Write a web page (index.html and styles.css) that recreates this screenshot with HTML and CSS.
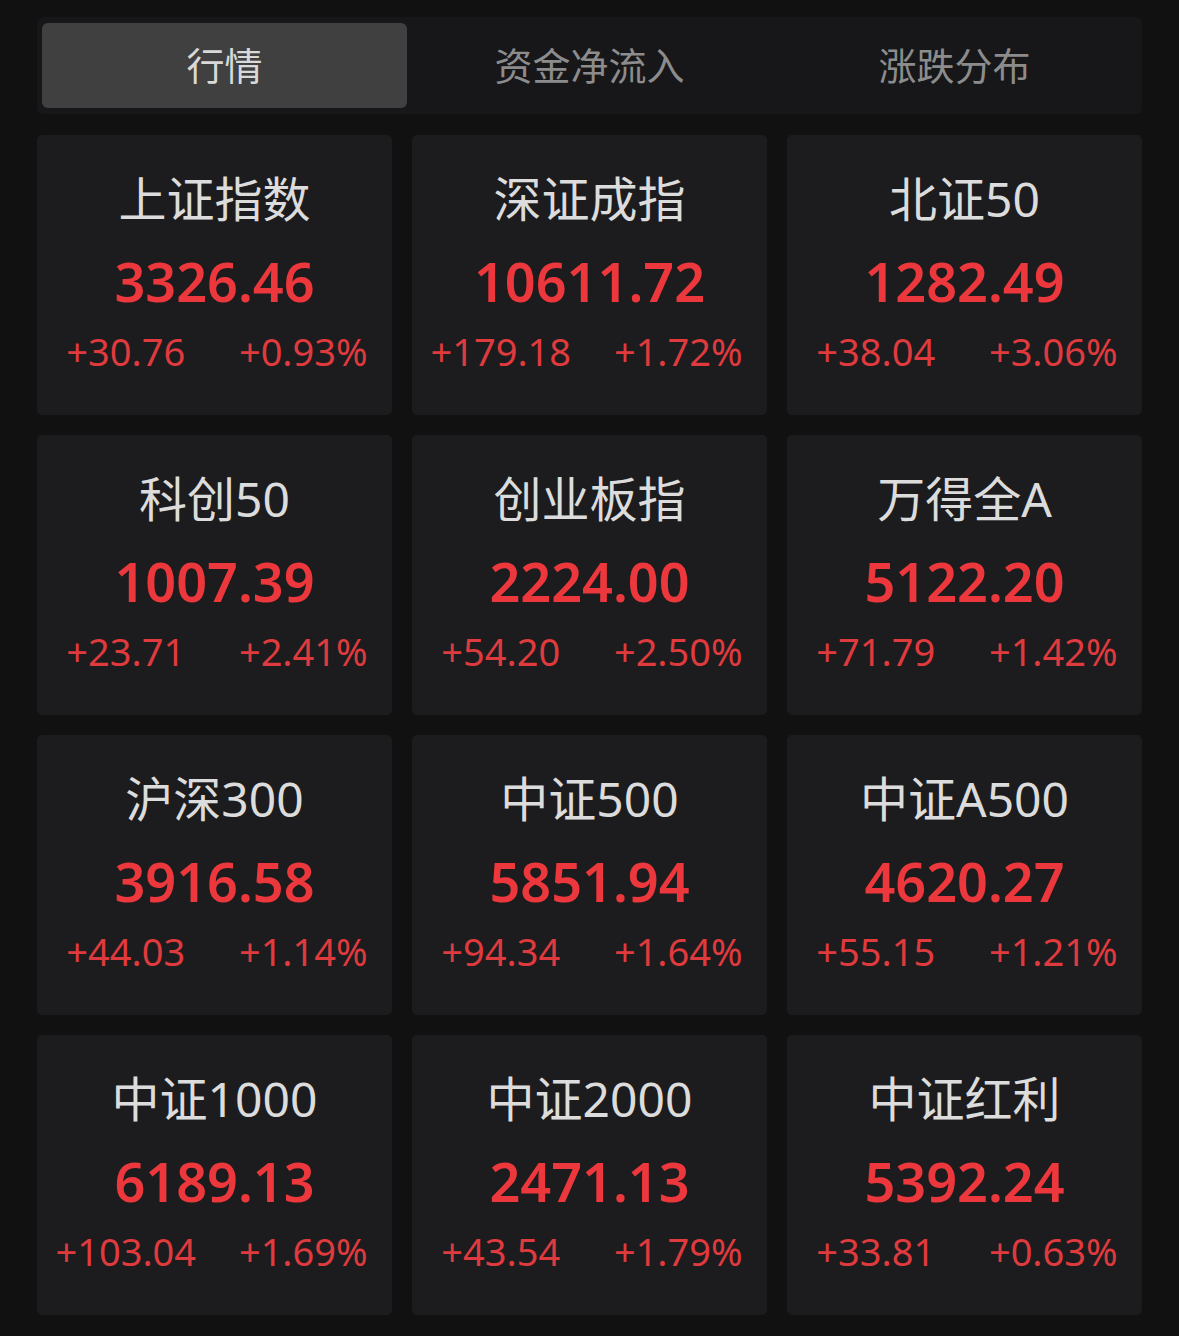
FILE: index.html
```html
<!DOCTYPE html>
<html lang="zh-CN">
<head>
<meta charset="utf-8">
<title>行情</title>
<link rel="stylesheet" href="styles.css">
</head>
<body>
<div class="page">
  <div class="tabs">
    <div class="tab active">行情</div>
    <div class="tab">资金净流入</div>
    <div class="tab">涨跌分布</div>
  </div>
  <div class="grid">
    <div class="card"><div class="name">上证指数</div><div class="price">3326.46</div><div class="chg"><span>+30.76</span><span>+0.93%</span></div></div>
    <div class="card"><div class="name">深证成指</div><div class="price">10611.72</div><div class="chg"><span>+179.18</span><span>+1.72%</span></div></div>
    <div class="card"><div class="name">北证50</div><div class="price">1282.49</div><div class="chg"><span>+38.04</span><span>+3.06%</span></div></div>
    <div class="card"><div class="name">科创50</div><div class="price">1007.39</div><div class="chg"><span>+23.71</span><span>+2.41%</span></div></div>
    <div class="card"><div class="name">创业板指</div><div class="price">2224.00</div><div class="chg"><span>+54.20</span><span>+2.50%</span></div></div>
    <div class="card"><div class="name">万得全A</div><div class="price">5122.20</div><div class="chg"><span>+71.79</span><span>+1.42%</span></div></div>
    <div class="card"><div class="name">沪深300</div><div class="price">3916.58</div><div class="chg"><span>+44.03</span><span>+1.14%</span></div></div>
    <div class="card"><div class="name">中证500</div><div class="price">5851.94</div><div class="chg"><span>+94.34</span><span>+1.64%</span></div></div>
    <div class="card"><div class="name">中证A500</div><div class="price">4620.27</div><div class="chg"><span>+55.15</span><span>+1.21%</span></div></div>
    <div class="card"><div class="name">中证1000</div><div class="price">6189.13</div><div class="chg"><span>+103.04</span><span>+1.69%</span></div></div>
    <div class="card"><div class="name">中证2000</div><div class="price">2471.13</div><div class="chg"><span>+43.54</span><span>+1.79%</span></div></div>
    <div class="card"><div class="name">中证红利</div><div class="price">5392.24</div><div class="chg"><span>+33.81</span><span>+0.63%</span></div></div>
  </div>
</div>
</body>
</html>
```
FILE: styles.css
```css
html, body {
  margin: 0;
  padding: 0;
  background: #111112;
}
body {
  font-family: "Noto Sans", "Noto Sans CJK SC", sans-serif;
}
.page {
  width: 1179px;
  height: 1336px;
  box-sizing: border-box;
  padding: 17px 37px 0 37px;
}
.tabs {
  display: grid;
  grid-template-columns: 1fr 1fr 1fr;
  height: 97px;
  box-sizing: border-box;
  padding: 6px 5px;
  background: #171719;
  border-radius: 6px;
}
.tab {
  display: flex;
  align-items: center;
  justify-content: center;
  padding-bottom: 5px;
  font-family: "Noto Sans CJK SC", sans-serif;
  font-size: 38px;
  color: #8c8c8c;
  border-radius: 6px;
}
.tab.active {
  background: #404041;
  color: #d9d9d9;
}
.grid {
  margin-top: 21px;
  display: grid;
  grid-template-columns: repeat(3, 355px);
  grid-auto-rows: 280px;
  column-gap: 20px;
  row-gap: 20px;
}
.card {
  background: #1c1c1e;
  border-radius: 5px;
  display: flex;
  flex-direction: column;
  align-items: center;
  padding-top: 34px;
  box-sizing: border-box;
}
.name {
  font-family: "Noto Sans", "Noto Sans CJK SC", sans-serif;
  font-size: 48px;
  line-height: 60px;
  height: 60px;
  color: #dcdcdc;
}
.price {
  margin-top: 17px;
  font-size: 54px;
  line-height: 70px;
  height: 70px;
  font-weight: 600;
  color: #ec383c;
}
.chg {
  margin-top: 10px;
  width: 100%;
  display: grid;
  grid-template-columns: 1fr 1fr;
  font-size: 38px;
  line-height: 50px;
  color: #df3a3d;
}
.chg span {
  text-align: center;
}
```
